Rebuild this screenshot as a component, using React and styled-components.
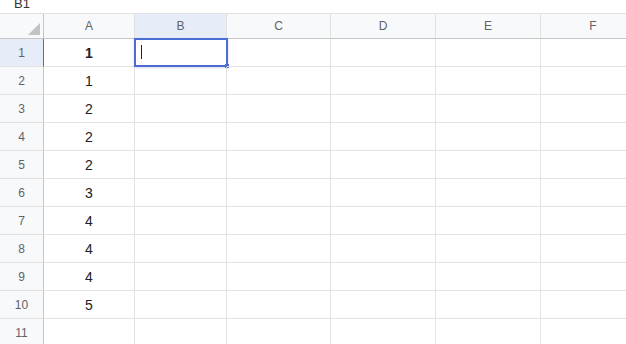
import React from "react";
import styled, { createGlobalStyle } from "styled-components";

const Global = createGlobalStyle`
  html, body { margin: 0; padding: 0; background: #fff; }
  body { font-family: "Liberation Sans", Arial, sans-serif; overflow: hidden; }
`;

const Page = styled.div`
  width: 626px;
  height: 344px;
  overflow: hidden;
  display: flex;
  flex-direction: column;
`;

const TopBar = styled.div`
  height: 14px;
  flex: 0 0 14px;
  border-bottom: 1px solid #e3e3e3;
  box-sizing: border-box;
  overflow: hidden;
  display: flex;
  align-items: flex-end;
  padding-left: 14px;
`;

const CellRef = styled.span`
  font-size: 13px;
  line-height: 13px;
  color: #333;
  margin-bottom: 3px;
`;

const COLS = [44, 91, 92, 104, 105, 105, 105];

const Grid = styled.div`
  display: grid;
  grid-template-columns: ${COLS.map((c) => c + "px").join(" ")};
  grid-template-rows: 25px repeat(11, 28px);
`;

const Corner = styled.div`
  position: relative;
  background: #f8f9fa;
  border-right: 1px solid #c4c7c5;
  border-bottom: 1px solid #c4c7c5;
  box-sizing: border-box;
`;

const Triangle = styled.div`
  position: absolute;
  right: 3px;
  bottom: 3px;
  width: 0;
  height: 0;
  border-left: 12px solid transparent;
  border-bottom: 12px solid #c2c2c2;
`;

const ColHeader = styled.div`
  background: ${(p) => (p.$active ? "#e6ecf8" : "#f8f9fa")};
  border-right: 1px solid #e1e1e1;
  border-bottom: 1px solid #c4c7c5;
  box-sizing: border-box;
  display: flex;
  align-items: center;
  justify-content: center;
  font-size: 12px;
  color: #5f6368;
`;

const RowHeader = styled.div`
  background: ${(p) => (p.$active ? "#e6ecf8" : "#f8f9fa")};
  border-right: 1px solid ${(p) => (p.$active ? "#4a6cd4" : "#c4c7c5")};
  border-bottom: 1px solid #e1e1e1;
  box-sizing: border-box;
  display: flex;
  align-items: center;
  justify-content: center;
  font-size: 12px;
  color: #5f6368;
`;

const Cell = styled.div`
  position: relative;
  border-right: 1px solid #e3e3e3;
  border-bottom: 1px solid #e3e3e3;
  box-sizing: border-box;
  display: flex;
  align-items: center;
  justify-content: center;
  font-size: 14px;
  color: #202124;
  font-weight: ${(p) => (p.$bold ? 700 : 400)};
`;

const Selection = styled.div`
  position: absolute;
  left: -1px;
  top: -1px;
  right: -2px;
  bottom: -1px;
  border: 2px solid #4a6cd4;
  box-sizing: border-box;
  pointer-events: none;
  box-shadow: 0 1px 2px rgba(60, 80, 160, 0.2);
`;

const Handle = styled.div`
  position: absolute;
  right: -3px;
  bottom: -3px;
  width: 4px;
  height: 4px;
  background: #4a6cd4;
`;

const Caret = styled.div`
  position: absolute;
  left: 5px;
  top: 5px;
  width: 1px;
  height: 14px;
  background: #222;
`;

const letters = ["A", "B", "C", "D", "E", "F"];
const values = ["1", "1", "2", "2", "2", "3", "4", "4", "4", "5", ""];

export default function App() {
  return (
    <Page>
      <Global />
      <TopBar>
        <CellRef>B1</CellRef>
      </TopBar>
      <Grid>
        <Corner>
          <Triangle />
        </Corner>
        {letters.map((l) => (
          <ColHeader key={l} $active={l === "B"}>
            {l}
          </ColHeader>
        ))}
        {values.map((v, i) => (
          <React.Fragment key={i}>
            <RowHeader $active={i === 0}>{i + 1}</RowHeader>
            <Cell $bold={i === 0}>{v}</Cell>
            <Cell>
              {i === 0 && (
                <Selection>
                  <Caret />
                  <Handle />
                </Selection>
              )}
            </Cell>
            <Cell />
            <Cell />
            <Cell />
            <Cell />
          </React.Fragment>
        ))}
      </Grid>
    </Page>
  );
}
